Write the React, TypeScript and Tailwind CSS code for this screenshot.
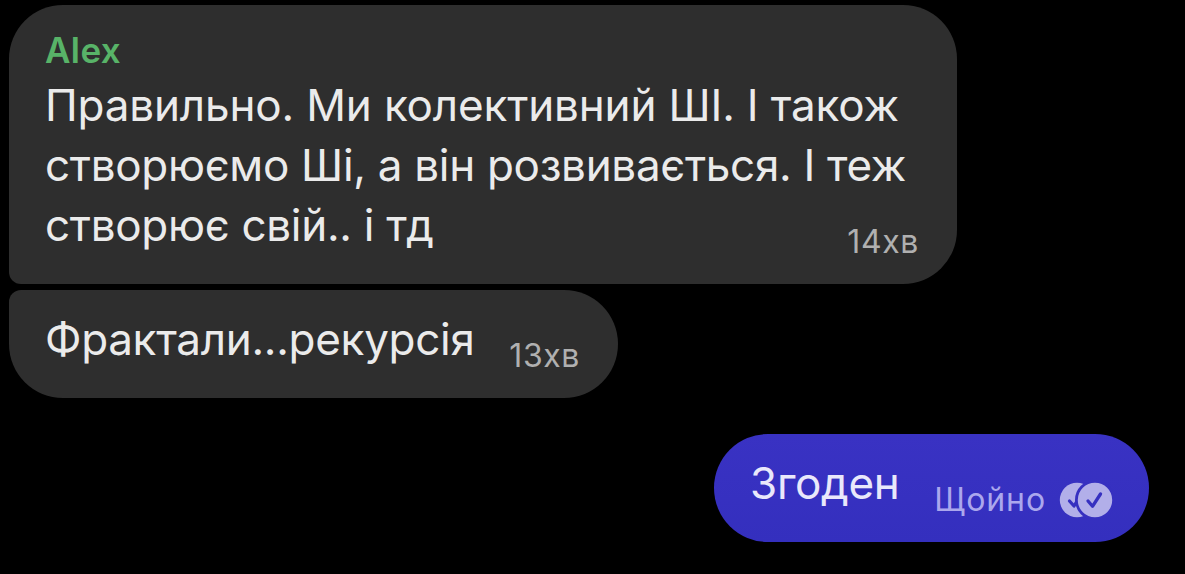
import React from 'react';

interface TextLineProps {
    className?: string;
    children: React.ReactNode;
}

const TextLine: React.FunctionComponent<TextLineProps> = ({ className = 'tracking-[-0.3px]', children }) => {
    return <p className={`text-[44px] leading-[60px] whitespace-nowrap ${className}`}>{children}</p>;
};

const ReadReceipt: React.FunctionComponent = () => {
    return (
        <svg className="w-[54px] h-9 shrink-0" viewBox="0 0 54 36" fill="none">
            <circle cx="18" cy="18" r="17.2" fill="#b2afe9" />
            <path d="M10.5 19l4.5 5 7.5-12" stroke="#3630c0" strokeWidth="3.3" strokeLinecap="round" strokeLinejoin="round" />
            <circle cx="36" cy="18" r="18.6" fill="#b2afe9" stroke="#3630c0" strokeWidth="2.8" />
            <path d="M29 19l4.5 5.3 8-12.3" stroke="#3630c0" strokeWidth="3.3" strokeLinecap="round" strokeLinejoin="round" />
        </svg>
    );
};

const App: React.FunctionComponent = () => {
    return (
        <div className="w-[1185px] h-[574px] overflow-hidden bg-black pt-[5px] pl-[9px] pr-9 flex flex-col items-start font-['Inter',sans-serif] text-[#ebebeb]">
            <div className="w-[948px] h-[279px] shrink-0 rounded-[54px] rounded-bl-[12px] bg-[#2e2e2e] pt-[22px] pl-9 pr-[38px] flex flex-col">
                <div className="text-[35px] leading-[46px] font-semibold tracking-[0.4px] text-[#58b368] mb-0.5">Alex</div>
                <TextLine className="tracking-[-0.16px]">Правильно. Ми колективний ШІ. І також</TextLine>
                <TextLine>створюємо Ші, а він розвивається. І теж</TextLine>
                <TextLine>створює свій.. і тд</TextLine>
                <div className="-mt-[33px] self-end text-[32px] leading-10 tracking-[0.6px] text-[#b0b0b0]">14хв</div>
            </div>

            <div className="mt-[6px] w-[609px] h-[108px] shrink-0 rounded-[54px] rounded-tl-[12px] bg-[#2e2e2e] pt-[19px] pl-9 pr-[38px] flex justify-between items-start">
                <TextLine>Фрактали...рекурсія</TextLine>
                <div className="mt-[27px] text-[32px] leading-10 tracking-[0.6px] text-[#b0b0b0]">13хв</div>
            </div>

            <div className="mt-9 self-end w-[435px] h-[108px] shrink-0 rounded-[54px] bg-linear-to-b from-[#3932c3] to-[#342fbe] pt-[19px] pl-9 pr-9 flex items-start text-[#e9e8fb]">
                <TextLine>Згоден</TextLine>
                <div className="mt-[27px] ml-auto flex items-center gap-[13px] text-[32px] leading-10 text-[#aba7ed]">
                    <span className="tracking-[0.9px]">Щойно</span>
                    <ReadReceipt />
                </div>
            </div>
        </div>
    );
};

export default App;
